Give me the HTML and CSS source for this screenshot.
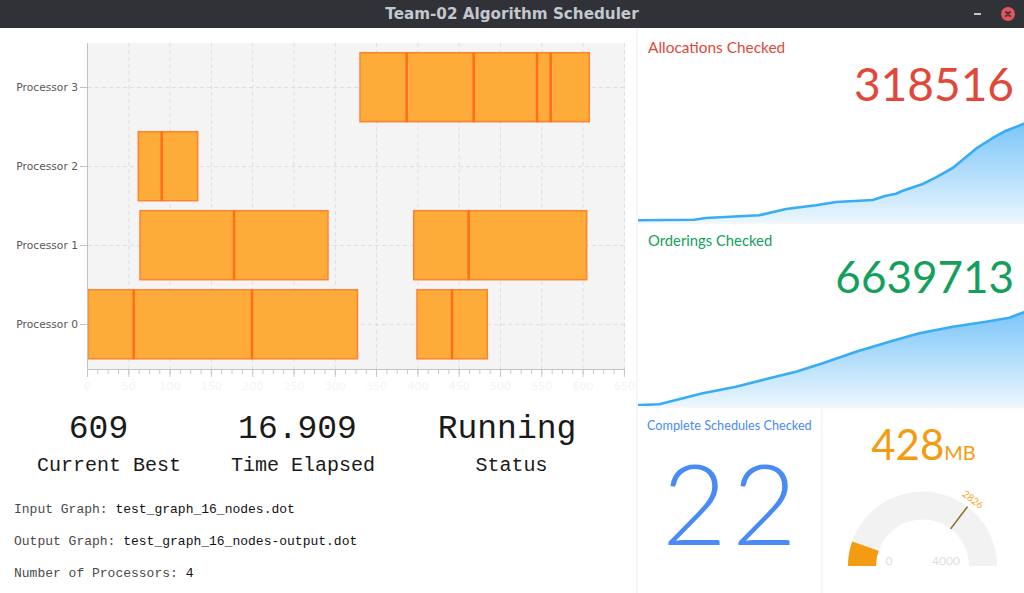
FILE: index.html
```html
<!DOCTYPE html>
<html>
<head>
<meta charset="utf-8">
<title>Team-02 Algorithm Scheduler</title>
<link rel="stylesheet" href="styles.css">
</head>
<body>
<div class="window">
  <header class="titlebar">
    <div></div>
    <div class="title">Team-02 Algorithm Scheduler</div>
    <div class="controls">
      <span class="min"></span>
      <svg class="close" width="14" height="14" viewBox="0 0 14 14"><circle cx="7" cy="7" r="7" fill="#dc585d"/><path d="M4.9 4.9L9.1 9.1M9.1 4.9L4.9 9.1" stroke="#3a2a2e" stroke-width="1.6" stroke-linecap="round"/></svg>
    </div>
  </header>
  <main class="main">
    <section class="left">
      <svg class="gantt" width="636" height="367" viewBox="0 28 636 367">
        <defs>
          <pattern id="minorTicks" x="87" y="0" width="10.325" height="10" patternUnits="userSpaceOnUse">
            <rect x="0" y="0" width="1" height="10" fill="#c6c6c6"/>
          </pattern>
          <pattern id="majorTicks" x="87" y="0" width="41.3" height="10" patternUnits="userSpaceOnUse">
            <rect x="0" y="0" width="1" height="10" fill="#c6c6c6"/>
          </pattern>
        </defs>
        <rect x="88" y="43" width="537" height="326" fill="#f4f4f4"/>
        <path class="grid" d="M128.8 43V369M170.1 43V369M211.4 43V369M252.7 43V369M294 43V369M335.3 43V369M376.6 43V369M417.9 43V369M459.2 43V369M500.5 43V369M541.8 43V369M583.1 43V369M624.4 43V369"/>
        <path class="grid" d="M88 87.5H625M88 166.5H625M88 245.5H625M88 324.5H625"/>
        <g class="bars">
          <rect x="360" y="52.7" width="46.7" height="69"/>
          <rect x="406.7" y="52.7" width="67" height="69"/>
          <rect x="473.7" y="52.7" width="63.3" height="69"/>
          <rect x="537" y="52.7" width="13.7" height="69"/>
          <rect x="550.7" y="52.7" width="38.6" height="69"/>
          <rect x="138.3" y="131.7" width="23.4" height="69"/>
          <rect x="161.7" y="131.7" width="36" height="69"/>
          <rect x="140" y="210.7" width="94" height="69"/>
          <rect x="234" y="210.7" width="94" height="69"/>
          <rect x="413.7" y="210.7" width="55" height="69"/>
          <rect x="468.7" y="210.7" width="118" height="69"/>
          <rect x="88" y="289.8" width="45.7" height="69"/>
          <rect x="133.7" y="289.8" width="118.3" height="69"/>
          <rect x="252" y="289.8" width="105.5" height="69"/>
          <rect x="417" y="289.8" width="35" height="69"/>
          <rect x="452" y="289.8" width="35.3" height="69"/>
        </g>
        <path class="divider" d="M406.7 52.7V121.7M473.7 52.7V121.7M537 52.7V121.7M550.7 52.7V121.7M161.7 131.7V200.7M234 210.7V279.7M468.7 210.7V279.7M133.7 289.8V358.8M252 289.8V358.8M452 289.8V358.8"/>
        <line x1="87.5" y1="43" x2="87.5" y2="369.5" class="axis"/>
        <line x1="87" y1="369.5" x2="625" y2="369.5" class="axis"/>
        <rect x="87" y="369" width="539" height="5" fill="url(#minorTicks)"/>
        <rect x="87" y="369" width="539" height="8" fill="url(#majorTicks)"/>
        <path class="axis" d="M80 87.5H88M80 166.5H88M80 245.5H88M80 324.5H88"/>
        <g class="ylabels">
          <text x="78" y="87.5">Processor 3</text>
          <text x="78" y="166.5">Processor 2</text>
          <text x="78" y="245.5">Processor 1</text>
          <text x="78" y="324.5">Processor 0</text>
        </g>
        <g class="xlabels">
          <text x="87.5" y="390">0</text>
          <text x="128.8" y="390">50</text>
          <text x="170.1" y="390">100</text>
          <text x="211.4" y="390">150</text>
          <text x="252.7" y="390">200</text>
          <text x="294" y="390">250</text>
          <text x="335.3" y="390">300</text>
          <text x="376.6" y="390">350</text>
          <text x="417.9" y="390">400</text>
          <text x="459.2" y="390">450</text>
          <text x="500.5" y="390">500</text>
          <text x="541.8" y="390">550</text>
          <text x="583.1" y="390">600</text>
          <text x="624.4" y="390">650</text>
        </g>
      </svg>
      <div class="stats">
        <div class="stat s1"><div class="val">609</div><div class="lbl">Current Best</div></div>
        <div class="stat s2"><div class="val">16.909</div><div class="lbl">Time Elapsed</div></div>
        <div class="stat s3"><div class="val">Running</div><div class="lbl">Status</div></div>
      </div>
      <div class="info">
        <p><span class="k">Input Graph: </span><span class="v">test_graph_16_nodes.dot</span></p>
        <p><span class="k">Output Graph: </span><span class="v">test_graph_16_nodes-output.dot</span></p>
        <p><span class="k">Number of Processors: </span><span class="v">4</span></p>
      </div>
    </section>
    <section class="right">
      <div class="card c1">
        <div class="ctitle red">Allocations Checked</div>
        <div class="cnum red">318516</div>
        <svg class="area" width="386" height="100" viewBox="638 122 386 100" preserveAspectRatio="none">
          <defs>
            <linearGradient id="g1" x1="0" y1="124" x2="0" y2="222" gradientUnits="userSpaceOnUse">
              <stop offset="0" stop-color="#7cc6f9"/>
              <stop offset="1" stop-color="#eaf6fe"/>
            </linearGradient>
          </defs>
          <path fill="url(#g1)" d="M639 220.3L694 219.7L706 218L759 215.3L786 209L816 205.3L836 202L872.7 200L886 195.7L896 193.7L902.7 190.7L922.7 184L936 177.3L952.7 168L976 148.7L992.7 138L1006 130.7L1024 123.7L1024 222L638 222Z"/>
          <path class="line" d="M639 220.3L694 219.7L706 218L759 215.3L786 209L816 205.3L836 202L872.7 200L886 195.7L896 193.7L902.7 190.7L922.7 184L936 177.3L952.7 168L976 148.7L992.7 138L1006 130.7L1024 123.7"/>
        </svg>
      </div>
      <div class="card c2">
        <div class="ctitle green">Orderings Checked</div>
        <div class="cnum green">6639713</div>
        <svg class="area" width="386" height="105" viewBox="638 301 386 105" preserveAspectRatio="none">
          <defs>
            <linearGradient id="g2" x1="0" y1="312" x2="0" y2="406" gradientUnits="userSpaceOnUse">
              <stop offset="0" stop-color="#7cc6f9"/>
              <stop offset="1" stop-color="#eaf6fe"/>
            </linearGradient>
          </defs>
          <path fill="url(#g2)" d="M638.7 405L659.3 404.3L676 400L702.7 393.3L736 386.7L769.3 378.3L796 371.7L822.7 363.3L856 351.7L889.3 341.7L919.3 333.3L952.7 326.7L986 321.7L1009.3 317.7L1024 312.3L1024 406L638 406Z"/>
          <path class="line" d="M638.7 405L659.3 404.3L676 400L702.7 393.3L736 386.7L769.3 378.3L796 371.7L822.7 363.3L856 351.7L889.3 341.7L919.3 333.3L952.7 326.7L986 321.7L1009.3 317.7L1024 312.3"/>
        </svg>
      </div>
      <div class="row3">
        <div class="card c3">
          <div class="ctitle small blue">Complete Schedules Checked</div>
          <div class="big blue">22</div>
        </div>
        <div class="card c4">
          <div class="mem"><span class="memnum">428</span><span class="memunit">MB</span></div>
          <svg class="gauge" width="201" height="126" viewBox="823 467 201 126">
            <path fill="#f2f2f2" d="M848 566A74.5 74.5 0 0 1 997 566L969 566A46.5 46.5 0 0 0 876 566Z"/>
            <path fill="#f39c12" d="M848 566A74.5 74.5 0 0 1 852.17 541.43L878.6 550.67A46.5 46.5 0 0 0 876 566Z"/>
            <line x1="950.6" y1="528.9" x2="967.5" y2="506.6" stroke="#8a6a1e" stroke-width="1.5"/>
            <text class="mark" x="973.2" y="499" transform="rotate(37.2 973.2 499)">2826</text>
            <text class="glabel" x="889" y="565">0</text>
            <text class="glabel" x="946" y="565">4000</text>
          </svg>
        </div>
      </div>
    </section>
  </main>
</div>
</body>
</html>
```
FILE: styles.css
```css
html, body {
  margin: 0;
  padding: 0;
}
body {
  width: 1024px;
  height: 593px;
  overflow: hidden;
  background: #ffffff;
  font-family: "Liberation Mono", monospace;
}
.window {
  display: flex;
  flex-direction: column;
  height: 593px;
}
.titlebar {
  height: 28px;
  flex: 0 0 28px;
  background: #303238;
  display: grid;
  grid-template-columns: 1fr auto 1fr;
  align-items: center;
}
.title {
  font-family: "DejaVu Sans", sans-serif;
  font-weight: bold;
  font-size: 15.2px;
  color: #c3c7ce;
  white-space: nowrap;
}
.controls {
  justify-self: end;
  display: flex;
  align-items: center;
  gap: 20px;
  padding-right: 9px;
}
.min {
  width: 7px;
  height: 2px;
  background: #c3c7ce;
}
.close {
  display: block;
}
.main {
  display: grid;
  grid-template-columns: 636px 388px;
  height: 565px;
}
.left {
  display: flex;
  flex-direction: column;
  background: #ffffff;
}
.gantt {
  display: block;
}
.gantt .grid {
  fill: none;
  stroke: #dedede;
  stroke-width: 1;
  stroke-dasharray: 4 3;
}
.gantt .bars rect {
  fill: #fdab39;
  stroke: #ff8132;
  stroke-width: 1.5;
}
.gantt .divider {
  fill: none;
  stroke: #ff6d1e;
  stroke-width: 2.4;
}
.gantt .axis {
  stroke: #c2c2c2;
  stroke-width: 1;
  fill: none;
}
.ylabels text {
  font-family: "DejaVu Sans", sans-serif;
  font-size: 10.7px;
  fill: #585858;
  text-anchor: end;
  dominant-baseline: central;
}
.xlabels text {
  font-family: "DejaVu Sans", sans-serif;
  font-size: 11px;
  fill: #f4f4f4;
  text-anchor: middle;
}
.stats {
  display: flex;
  padding: 15px 0 0 14px;
}
.stat {
  display: flex;
  flex-direction: column;
  align-items: center;
  color: #1a1a1a;
}
.s1 { width: 190px; }
.s2 { width: 198px; }
.s3 { width: 219px; }
.val {
  font-size: 33px;
  line-height: 40px;
  white-space: nowrap;
}
.lbl {
  font-size: 20px;
  line-height: 24px;
  margin-top: 4px;
  white-space: nowrap;
}
.s1 .val { margin-right: 21px; }
.s2 .val { margin-right: 11px; }
.s3 .val { margin-right: 9px; }
.info {
  padding: 22px 0 0 14px;
  display: flex;
  flex-direction: column;
  gap: 12px;
}
.info p {
  margin: 0;
  font-size: 13px;
  line-height: 20px;
  white-space: nowrap;
}
.k { color: #4a4a4a; }
.v { color: #111111; }

.right {
  background: #f6f6f6;
  padding-left: 2px;
  display: grid;
  grid-template-rows: 194px 182px 1fr;
  gap: 2px;
  font-family: "Lato", "Noto Sans", sans-serif;
}
.card {
  background: #ffffff;
  display: flex;
  flex-direction: column;
  overflow: hidden;
  min-height: 0;
}
.row3 {
  display: grid;
  grid-template-columns: 183px 1fr;
  gap: 2px;
  min-height: 0;
}
.red { color: #e0483a; }
.green { color: #14a05c; }
.blue { color: #4a8af4; }
.ctitle {
  line-height: 20px;
  padding: 0 10px;
  white-space: nowrap;
}
.c1 .ctitle {
  font-size: 15.4px;
  padding-top: 9px;
}
.c2 .ctitle {
  font-size: 14.8px;
  padding-top: 6px;
}
.cnum {
  text-align: right;
  padding-right: 10px;
  line-height: 50px;
}
.c1 .cnum {
  font-size: 46px;
  margin-top: 2px;
}
.c2 .cnum {
  font-size: 44px;
  margin-top: 1px;
}
.c1 .area {
  margin-top: 13px;
}
.area {
  display: block;
}
.area .line {
  fill: none;
  stroke: #38acf5;
  stroke-width: 2.6;
  stroke-linejoin: round;
  stroke-linecap: round;
}
.ctitle.small {
  font-size: 12.7px;
  line-height: 18px;
  padding: 8px 0 0 9px;
}
.big {
  font-size: 112px;
  font-weight: 300;
  line-height: 120px;
  letter-spacing: 5px;
  padding-left: 5px;
  margin-top: 8px;
  text-align: center;
}
.mem {
  margin-top: 13px;
  height: 46px;
  font-size: 42px;
  line-height: 46px;
  text-align: center;
  color: #f39c12;
  white-space: nowrap;
}
.memunit {
  font-size: 20px;
  line-height: 20px;
}
.gauge {
  display: block;
  flex: 0 0 auto;
}
.gauge .mark {
  font-family: "Lato", sans-serif;
  font-size: 10px;
  fill: #f5a623;
  text-anchor: middle;
  dominant-baseline: central;
}
.gauge .glabel {
  font-family: "Lato", sans-serif;
  font-size: 12px;
  fill: #dddddd;
  text-anchor: middle;
}
```
